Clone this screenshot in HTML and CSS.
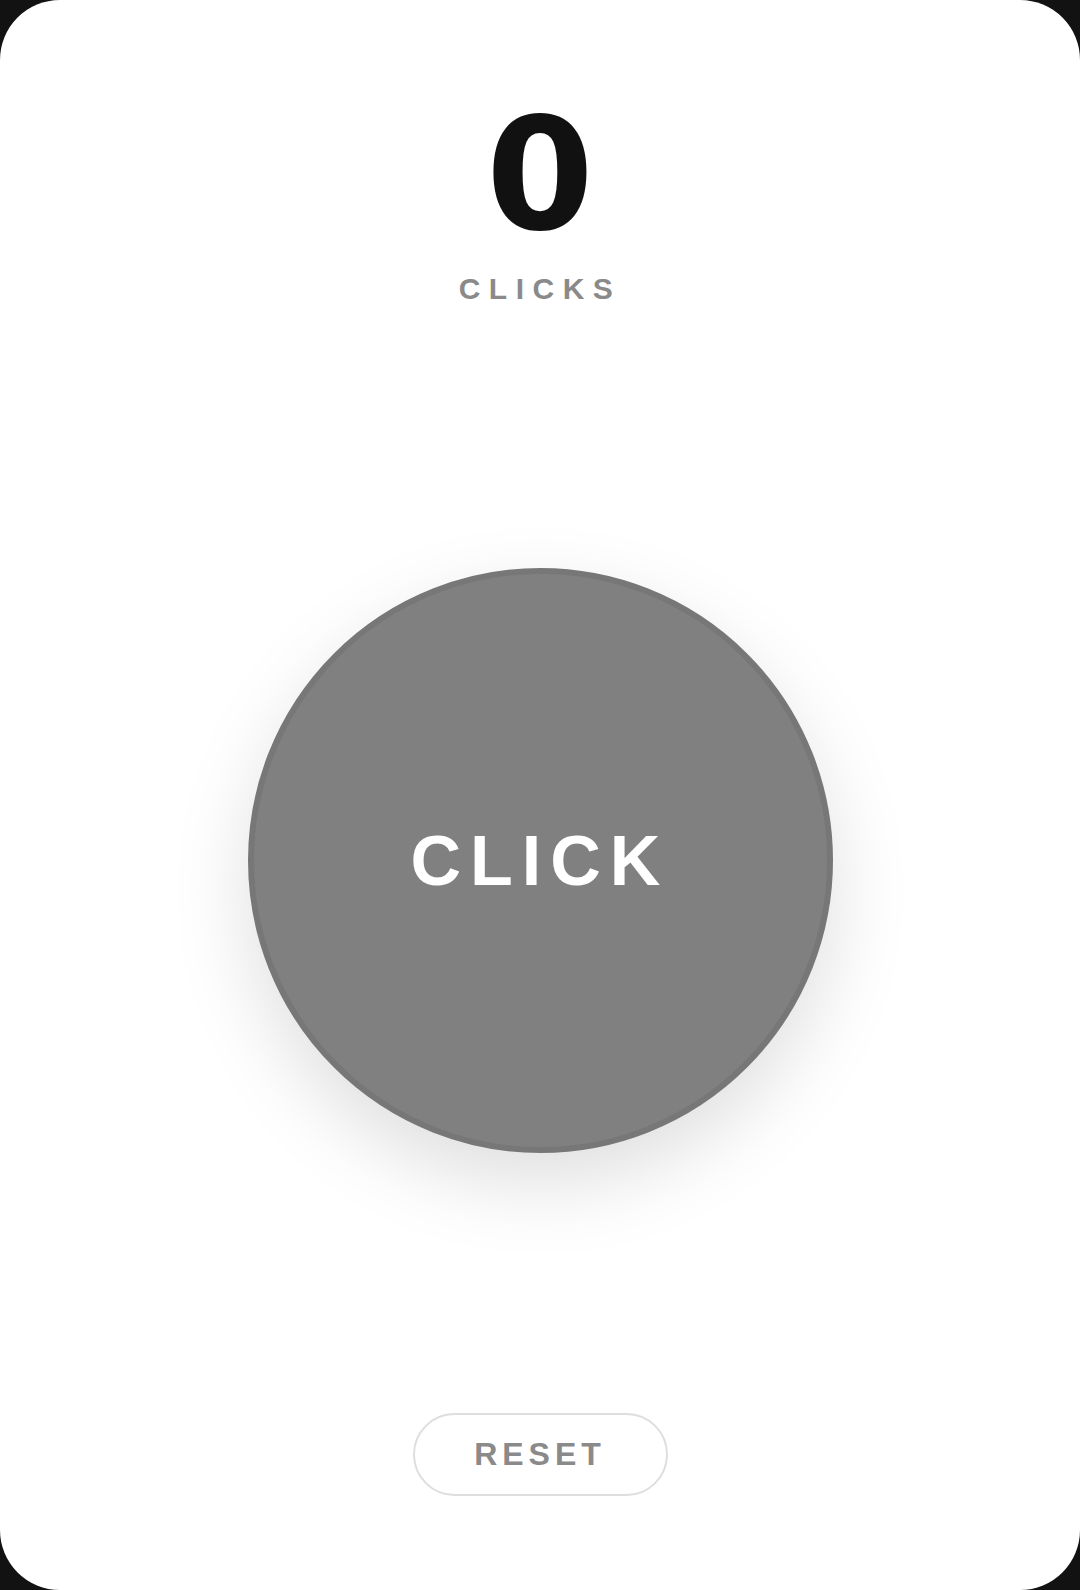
FILE: index.html
```html
<!DOCTYPE html>
<html lang="en">
<head>
<meta charset="utf-8">
<title>Click Counter</title>
<link rel="stylesheet" href="styles.css">
</head>
<body>
<main class="card">
  <header class="counter">
    <div class="count">0</div>
    <div class="count-label">CLICKS</div>
  </header>
  <section class="stage">
    <button class="click-btn" type="button">CLICK</button>
  </section>
  <button class="reset-btn" type="button">RESET</button>
</main>
</body>
</html>
```

FILE: styles.css
```css
html, body {
  margin: 0;
  padding: 0;
  height: 100%;
  background: #121212;
}

body {
  font-family: "Liberation Sans", Arial, sans-serif;
}

.card {
  box-sizing: border-box;
  width: 1080px;
  height: 1590px;
  background: #ffffff;
  border-radius: 60px;
  display: flex;
  flex-direction: column;
  align-items: center;
  padding: 98px 0 94px;
  overflow: hidden;
}

.counter {
  display: flex;
  flex-direction: column;
  align-items: center;
}

.count {
  font-family: "DejaVu Sans", "Liberation Sans", sans-serif;
  font-size: 155px;
  line-height: 1;
  font-weight: 700;
  color: #111111;
}

.count-label {
  margin-top: 21px;
  font-size: 30px;
  line-height: 1;
  font-weight: 700;
  letter-spacing: 8.5px;
  color: #8a8a8a;
}

.stage {
  flex: 1;
  display: flex;
  align-items: center;
  justify-content: center;
  padding-top: 4px;
}

.click-btn {
  box-sizing: border-box;
  width: 585px;
  height: 585px;
  border-radius: 50%;
  background: #808080;
  border: 6px solid #777777;
  box-shadow: 0 30px 80px rgba(0, 0, 0, 0.13);
  color: #ffffff;
  font-family: "Liberation Sans", Arial, sans-serif;
  font-size: 70px;
  font-weight: 700;
  letter-spacing: 9px;
  padding: 0;
  cursor: pointer;
}

.reset-btn {
  box-sizing: border-box;
  width: 255px;
  height: 83px;
  border-radius: 42px;
  background: #ffffff;
  border: 2px solid #dedede;
  color: #8a8a8a;
  font-family: "Liberation Sans", Arial, sans-serif;
  font-size: 32px;
  font-weight: 700;
  letter-spacing: 5px;
  padding: 0;
  cursor: pointer;
}
```
